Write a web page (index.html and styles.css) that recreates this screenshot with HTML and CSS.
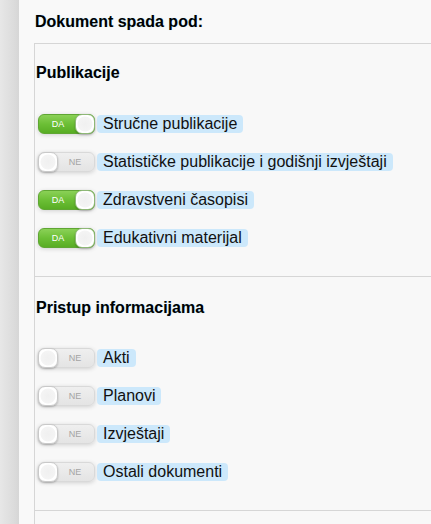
FILE: index.html
```html
<!DOCTYPE html>
<html lang="hr">
<head>
<meta charset="utf-8">
<title>Dokument spada pod</title>
<link rel="stylesheet" href="styles.css">
</head>
<body>
<div class="page">
  <div class="shade"></div>
  <div class="main">
    <h3 class="title">Dokument spada pod:</h3>
    <div class="panel">
      <section class="section">
        <h4 class="section-title">Publikacije</h4>
        <ul class="list">
          <li class="row"><span class="toggle on"><span class="state">DA</span><span class="knob"></span></span><span class="label">Stručne publikacije</span></li>
          <li class="row"><span class="toggle off"><span class="knob"></span><span class="state">NE</span></span><span class="label">Statističke publikacije i godišnji izvještaji</span></li>
          <li class="row"><span class="toggle on"><span class="state">DA</span><span class="knob"></span></span><span class="label">Zdravstveni časopisi</span></li>
          <li class="row"><span class="toggle on"><span class="state">DA</span><span class="knob"></span></span><span class="label">Edukativni materijal</span></li>
        </ul>
      </section>
      <section class="section">
        <h4 class="section-title">Pristup informacijama</h4>
        <ul class="list">
          <li class="row"><span class="toggle off"><span class="knob"></span><span class="state">NE</span></span><span class="label">Akti</span></li>
          <li class="row"><span class="toggle off"><span class="knob"></span><span class="state">NE</span></span><span class="label">Planovi</span></li>
          <li class="row"><span class="toggle off"><span class="knob"></span><span class="state">NE</span></span><span class="label">Izvještaji</span></li>
          <li class="row"><span class="toggle off"><span class="knob"></span><span class="state">NE</span></span><span class="label">Ostali dokumenti</span></li>
        </ul>
      </section>
    </div>
  </div>
</div>
</body>
</html>
```

FILE: styles.css
```css
html, body {
  margin: 0;
  padding: 0;
  height: 100%;
  overflow: hidden;
  background: #f9f9f9;
  font-family: "Liberation Sans", Arial, sans-serif;
  color: #111;
}

.page {
  display: flex;
  height: 100%;
}

.shade {
  flex: 0 0 19px;
  background: linear-gradient(to right, #e7e7e7 0%, #dcdcdc 70%, #d6d6d6 100%);
}

.main {
  flex: 1;
  display: flex;
  flex-direction: column;
  padding: 13px 0 0 15px;
  background: #f9f9f9;
  min-height: 0;
}

.title {
  margin: 0 0 12px 1px;
  font-size: 16px;
  line-height: 18px;
  font-weight: bold;
  color: #000;
  text-shadow: 0 0 1px rgba(0, 170, 255, 0.35);
}

.panel {
  flex: 1;
  min-height: 0;
  overflow: hidden;
  border-top: 1px solid #d6d6d6;
  border-left: 1px solid #d6d6d6;
  background: #f8f8f8;
}

.section {
  padding: 20px 0 28px 0;
  border-bottom: 1px solid #d6d6d6;
}

.section + .section {
  padding-top: 22px;
}

.section-title {
  margin: 0 0 0 1px;
  font-size: 16px;
  line-height: 18px;
  font-weight: bold;
  color: #000;
  text-shadow: 0 0 1px rgba(0, 170, 255, 0.35);
}

.list {
  list-style: none;
  margin: 32px 0 0 0;
  padding: 0;
  display: flex;
  flex-direction: column;
  gap: 18px;
}

.section + .section .list {
  margin-top: 31px;
}

.row {
  display: flex;
  align-items: center;
  height: 20px;
  padding-left: 3px;
  gap: 2px;
}

.toggle {
  box-sizing: border-box;
  width: 57px;
  height: 20px;
  border-radius: 6px;
  display: flex;
  align-items: center;
  box-shadow: 0 1px 4px rgba(0, 0, 0, 0.16);
}

.toggle.on {
  background: linear-gradient(to bottom, #8bd157 0%, #6cbf36 50%, #58ad24 100%);
  border: 1px solid #5fa633;
}

.toggle.off {
  background: linear-gradient(to bottom, #efefef 0%, #e4e4e4 100%);
  border: 1px solid #d9d9d9;
}

.state {
  flex: 1;
  text-align: center;
  font-size: 9px;
  line-height: 10px;
}

.toggle.on .state {
  color: #fff;
  padding-left: 2px;
}

.toggle.off .state {
  color: #a4a4a4;
  padding-right: 2px;
}

.knob {
  box-sizing: border-box;
  flex: 0 0 20px;
  width: 20px;
  height: 20px;
  border-radius: 7px;
  background: radial-gradient(circle at 50% 50%, #f0f0f0 0%, #f4f4f4 55%, #ffffff 62%, #ffffff 100%);
  border: 1px solid #c9c9c9;
  box-shadow: 0 1px 2px rgba(0, 0, 0, 0.25);
}

.toggle.on .knob {
  margin-right: -1px;
  border-color: #8fb878;
}

.toggle.off .knob {
  margin-left: -1px;
}

.label {
  display: inline-block;
  font-size: 16px;
  line-height: 18px;
  padding: 0 6px;
  background: #cce8fb;
  border-radius: 4px;
  color: #111;
  white-space: nowrap;
}
```
